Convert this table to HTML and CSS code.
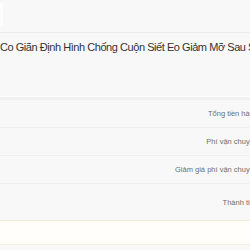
FILE: index.html
```html
<!DOCTYPE html>
<html lang="vi">
<head>
  <meta charset="UTF-8">
  <meta name="viewport" content="width=device-width, initial-scale=1.0">
  <title>Chi tiết đơn hàng</title>
  <link rel="stylesheet" href="styles.css">
</head>
<body>
  <div class="page">
    <div class="shop-bar">
      <div class="shop-card"></div>
    </div>

    <div class="product">
      <p class="product-name">Co Giãn Định Hình Chống Cuộn Siết Eo Giảm Mỡ Sau Sinh</p>
    </div>

    <div class="summary">
      <div class="row">
        <div class="label">Tổng tiền hàng</div>
        <div class="value">₫189.000</div>
      </div>
      <div class="row">
        <div class="label">Phí vận chuyển</div>
        <div class="value">₫32.700</div>
      </div>
      <div class="row">
        <div class="label">Giảm giá phí vận chuyển</div>
        <div class="value">-₫32.700</div>
      </div>
      <div class="row row-total">
        <div class="label">Thành tiền</div>
        <div class="value">₫189.000</div>
      </div>
      <div class="row row-note"></div>
    </div>
  </div>
</body>
</html>
```

FILE: styles.css
```css
* {
  margin: 0;
  padding: 0;
  box-sizing: border-box;
}

body {
  font-family: "Liberation Sans", Arial, sans-serif;
  background-color: #f8f8f8;
  overflow: hidden;
}

.page {
  width: 340px;
}

.shop-bar {
  height: 33px;
  padding-top: 3px;
  border-bottom: 1px solid #ebebeb;
}

.shop-card {
  width: 3px;
  height: 23px;
  background-color: #fdfdfd;
}

.product {
  height: 64px;
  padding-top: 8px;
  border-bottom: 1px solid #fff;
}

.product-name {
  font-size: 11px;
  letter-spacing: -0.45px;
  color: #333;
  white-space: nowrap;
}

.summary {
  border-top: 2px solid #f1f1f1;
}

.row {
  display: flex;
  align-items: center;
  height: 28px;
  border-top: 1px solid #efefef;
}

.label {
  width: 258px;
  text-align: right;
  font-size: 7.5px;
  color: #6f6f6f;
  white-space: nowrap;
}

.value {
  flex: 1;
  padding-left: 10px;
  font-size: 8px;
  color: #333;
  text-align: right;
}

.row-total {
  height: 37px;
}

.row-note {
  height: 25px;
  background-color: #fffefa;
  border-top: 1px solid #f0eddc;
  border-bottom: 1px solid #f0eddc;
}
```
